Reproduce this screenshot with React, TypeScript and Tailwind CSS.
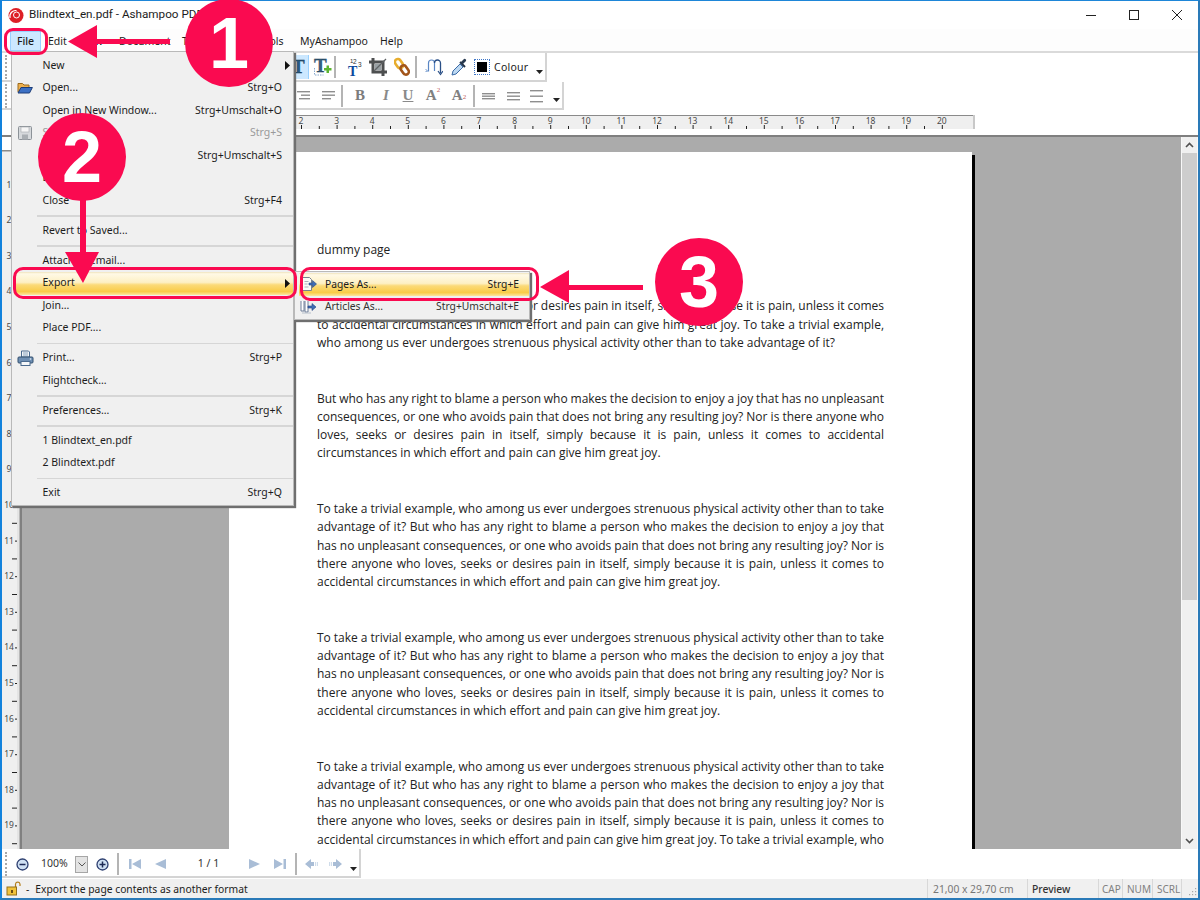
import React from "react";

const PINK = "#fa0a50";

const P1 = [
  ["Nor is there anyone who loves, seeks or desires pain in itself, simply because it is pain, unless it comes", 1],
  ["to accidental circumstances in which effort and pain can give him great joy. To take a trivial example,", 1],
  ["who among us ever undergoes strenuous physical activity other than to take advantage of it?", 0],
];
const P2 = [
  ["But who has any right to blame a person who makes the decision to enjoy a joy that has no unpleasant", 1],
  ["consequences, or one who avoids pain that does not bring any resulting joy? Nor is there anyone who", 1],
  ["loves, seeks or desires pain in itself, simply because it is pain, unless it comes to accidental", 1],
  ["circumstances in which effort and pain can give him great joy.", 0],
];
const P3 = [
  ["To take a trivial example, who among us ever undergoes strenuous physical activity other than to take", 1],
  ["advantage of it? But who has any right to blame a person who makes the decision to enjoy a joy that", 1],
  ["has no unpleasant consequences, or one who avoids pain that does not bring any resulting joy? Nor is", 1],
  ["there anyone who loves, seeks or desires pain in itself, simply because it is pain, unless it comes to", 1],
  ["accidental circumstances in which effort and pain can give him great joy.", 0],
];
const P5 = [
  ...P3.slice(0, 4),
  ["accidental circumstances in which effort and pain can give him great joy. To take a trivial example, who", 1],
];

function Para({ lines }: { lines: (string | number)[][] }) {
  return (
    <div className="mb-[37.5px]">
      {lines.map((l, i) => (
        <div key={i} className={l[1] ? "h-[18.25px] whitespace-nowrap text-justify [text-align-last:justify] [word-spacing:-0.7px]" : "h-[18.25px] whitespace-nowrap"}>
          {l[0]}
        </div>
      ))}
    </div>
  );
}

function Caret() {
  return (
    <svg width="7" height="4" viewBox="0 0 7 4" className="shrink-0">
      <path d="M0 0h7L3.500 4z" fill="#222" />
    </svg>
  );
}

function Sep() {
  return <div className="w-[2px] h-[22px] bg-[#b4b4b4] shrink-0" />;
}

function Lines({ ys, x1 = [1, 1, 1], x2 = [14, 14, 14] }: { ys: number[]; x1?: number[]; x2?: number[] }) {
  return (
    <svg width="15" height="16" viewBox="0 0 15 16" className="shrink-0">
      {ys.map((y, i) => (
        <rect key={i} x={x1[i]} y={y} width={x2[i] - x1[i]} height="1.4" fill="#8e8e8e" />
      ))}
    </svg>
  );
}

function Glyph({ children, cls }: { children: React.ReactNode; cls: string }) {
  return <span className={"flex items-center justify-center shrink-0 [font-family:'Liberation_Serif',serif] " + cls}>{children}</span>;
}

function FolderIcon() {
  return (
    <svg width="16" height="16" viewBox="0 0 16 16">
      <path d="M1 12V3.500h4.500l1.500 1.500h5v3" fill="#eeb04e" stroke="#9a6a1e" />
      <path d="M1 13l3-5.500h11.400L12.500 13z" fill="#3c70c4" stroke="#1c3d78" />
    </svg>
  );
}
function SaveIcon() {
  return (
    <svg width="16" height="16" viewBox="0 0 16 16">
      <rect x="1.500" y="1.500" width="13" height="13" rx="1" fill="#d6d9dc" stroke="#8c9298" />
      <rect x="4" y="2" width="8" height="5" fill="#f6f6f6" stroke="#a5a9ad" strokeWidth=".6" />
      <rect x="5" y="9.500" width="6" height="5" fill="#a9aeb3" />
    </svg>
  );
}
function PrintIcon() {
  return (
    <svg width="17" height="17" viewBox="0 0 17 17">
      <path d="M4.500 1h7l1 1v5h-8z" fill="#f2f5f8" stroke="#4b6a8e" />
      <path d="M6 3h5M6 5h5" stroke="#8aa2bc" />
      <rect x="1" y="7" width="15" height="6" rx="1" fill="#6f8fb3" stroke="#33506f" />
      <rect x="4" y="11.500" width="9" height="4" fill="#f5f7f9" stroke="#4b6a8e" />
      <circle cx="13.500" cy="9" r=".8" fill="#e5eef7" />
    </svg>
  );
}
function PagesIcon() {
  return (
    <svg width="16" height="16" viewBox="0 0 16 16">
      <path d="M1.500 1.500h7l2 2V14.500h-9z" fill="#fbfbf6" stroke="#77818f" />
      <path d="M3.500 5.500h4M3.500 8h3M3.500 11h4" stroke="#a9b1bc" />
      <path d="M8 7h3.500V4.500L15.500 8 11.500 11.500V9H8z" fill="#3f6db5" stroke="#23457f" strokeWidth=".6" />
    </svg>
  );
}
function ArticlesIcon() {
  return (
    <svg width="17" height="16" viewBox="0 0 17 16">
      <path d="M1 2v10h3V2M5 2v11h3V2" fill="#fff" stroke="#6e7f99" />
      <path d="M8 7h4V4.500L16 8l-4 3.500V9H8z" fill="#3f6db5" stroke="#23457f" strokeWidth=".6" />
      <path d="M2 14h9" stroke="#b6bfca" />
    </svg>
  );
}

type MI = { t?: string; s?: string; icon?: React.ReactNode; dis?: boolean; sub?: boolean; hi?: boolean; sep?: boolean };
const MENU: MI[] = [
  { t: "New", sub: true },
  { t: "Open...", s: "Strg+O", icon: <FolderIcon /> },
  { t: "Open in New Window...", s: "Strg+Umschalt+O" },
  { t: "Save", s: "Strg+S", icon: <SaveIcon />, dis: true },
  { t: "Save As...", s: "Strg+Umschalt+S" },
  { t: "Email..." },
  { t: "Close", s: "Strg+F4" },
  { sep: true },
  { t: "Revert to Saved..." },
  { sep: true },
  { t: "Attach to Email..." },
  { t: "Export", sub: true, hi: true },
  { t: "Join..." },
  { t: "Place PDF...." },
  { sep: true },
  { t: "Print...", s: "Strg+P", icon: <PrintIcon /> },
  { t: "Flightcheck..." },
  { sep: true },
  { t: "Preferences...", s: "Strg+K" },
  { sep: true },
  { t: "1 Blindtext_en.pdf" },
  { t: "2 Blindtext.pdf" },
  { sep: true },
  { t: "Exit", s: "Strg+Q" },
];

const HI =
  "bg-[linear-gradient(#efe3bc_0%,#fff9e6_8%,#fdf0c4_45%,#fbda78_56%,#f9cc48_85%,#fce79f_100%)]";

function Arrow() {
  return (
    <svg width="5" height="9" viewBox="0 0 5 9" className="shrink-0 ml-auto -mr-[8px]">
      <path d="M0 0l5 4.500L0 9z" fill="#111" />
    </svg>
  );
}

export default function App() {
  const hRuler = Array.from({ length: 41 }, (_, i) => i);
  const vRuler = Array.from({ length: 40 }, (_, i) => i);
  return (
    <div className="relative w-[1200px] h-[900px] overflow-hidden bg-white [font-family:'Noto_Sans',sans-serif] text-[#1c1c1c]">
      <div className="flex flex-col h-full border-t border-r-2 border-b-2 border-l-2 border-t-[#1e86d8] border-l-[#1282dc] border-r-[#2a7ab8] border-b-[#2a7ab8]">
        {/* title bar */}
        <div className="h-[28px] flex items-center shrink-0">
          <svg width="17" height="17" viewBox="0 0 17 17" className="ml-[5px] mt-[1px] shrink-0">
            <circle cx="9" cy="8.500" r="7.500" fill="#dd1f26" />
            <path d="M3 11C2 6 6 3 9.500 3.600" stroke="#fff" strokeWidth="1.200" fill="none" />
            <circle cx="9.500" cy="8" r="3" fill="none" stroke="#fff" strokeWidth="1" />
          </svg>
          <span className="ml-[5px] text-[11.7px] [font-family:'Roboto',sans-serif] whitespace-nowrap">Blindtext_en.pdf - Ashampoo PDF Pro</span>
          <div className="ml-auto flex items-center gap-[33px] mr-[16px]">
            <svg width="10" height="10" viewBox="0 0 10 10"><path d="M0 5.500h10" stroke="#222" /></svg>
            <svg width="10" height="10" viewBox="0 0 10 10"><rect x=".5" y=".5" width="9" height="9" fill="none" stroke="#222" /></svg>
            <svg width="10" height="10" viewBox="0 0 10 10"><path d="M0 0l10 10M10 0L0 10" stroke="#222" /></svg>
          </div>
        </div>
        {/* menu bar */}
        <div className="h-[24px] shrink-0 flex items-center border-b-2 border-[#dadada] bg-[#fdfdfd] text-[10.5px] pt-[2px]">
          <div className="ml-[8px] w-[31px] h-[20px] flex items-center justify-center bg-[#cce8ff] border border-[#99d1ff] font-medium pt-[1px]">File</div>
          <span className="ml-[7px] w-[32px] pt-[1px]">Edit</span>
          <span className="w-[39px] pt-[1px]">View</span>
          <span className="w-[63px] pt-[1px]">Document</span>
          <span className="w-[76px] pt-[1px]">Text</span>
          <span className="w-[42px] pt-[1px]">Tools</span>
          <span className="w-[80px] pt-[1px]">MyAshampoo</span>
          <span className="pt-[1px]">Help</span>
        </div>
        {/* toolbars */}
        <div className="h-[62px] shrink-0 flex flex-col">
          <div className="w-[545px] h-[29px] flex items-center border-r-2 border-b-2 border-[#d4d4d4] pl-[3px] pt-[1px]">
            <div className="h-[24px] border-l-2 border-dotted border-[#a8a8a8]" />
            <div className="ml-[287px] w-[15px] h-[24px] bg-[#cce8ff] border-r border-[#99d1ff] flex items-center justify-center overflow-hidden">
              <svg width="18" height="18" viewBox="0 0 18 18" className="shrink-0">
                <text x="0" y="15" fontFamily="Liberation Serif" fontWeight="700" fontSize="19" fill="#2b5a7d" stroke="#16324a" strokeWidth=".3">T</text>
              </svg>
            </div>
            <div className="w-[25px] flex justify-center">
              <svg width="20" height="20" viewBox="0 0 20 20" className="overflow-visible">
                <path d="M2.500 11v7h9" fill="none" stroke="#88a9cc" strokeDasharray="1.500 1" />
                <text x="2" y="15" fontFamily="Liberation Serif" fontWeight="700" fontSize="19" fill="#35607f" stroke="#16324a" strokeWidth=".3">T</text>
                <path d="M12 11h2.500V8.500h2.500V11h2.500v2.500H17V16h-2.500v-2.500H12z" fill="#5cb531" />
              </svg>
            </div>
            <Sep />
            <div className="ml-[6px] w-[24px] flex justify-center">
              <svg width="20" height="20" viewBox="0 0 20 20" className="overflow-visible">
                <text x="4" y="19" fontFamily="Liberation Serif" fontWeight="700" fontSize="14" fill="#0c4a9e">T</text>
                <text x="9" y="7" fontFamily="Liberation Sans" fontSize="6.500" fill="#333">2</text>
                <text x="6" y="5.500" fontFamily="Liberation Sans" fontSize="6" fill="#333">1</text>
                <text x="14" y="10" fontFamily="Liberation Sans" fontSize="6.500" fill="#333">3</text>
              </svg>
            </div>
            <div className="w-[23px] flex justify-center">
              <svg width="18" height="18" viewBox="0 0 18 18">
                <path d="M4 0v14h14M0 4h14v14" fill="none" stroke="#4d4f50" strokeWidth="3" />
                <rect x="6" y="6" width="6" height="6" fill="#98a0a4" />
                <path d="M5 13L17 1" stroke="#5e6264" strokeWidth="1.200" />
              </svg>
            </div>
            <div className="w-[25px] flex justify-center">
              <svg width="16" height="20" viewBox="0 0 16 20">
                <g transform="rotate(-35 8 10)" fill="none">
                  <rect x="4.500" y="0.500" width="6" height="10" rx="3" stroke="#e7ad2e" strokeWidth="2.600" />
                  <rect x="5.500" y="9" width="6" height="10" rx="3" stroke="#a2551a" strokeWidth="2.600" />
                </g>
              </svg>
            </div>
            <div className="ml-[1px]"><Sep /></div>
            <div className="ml-[5px] w-[24px] flex justify-center">
              <svg width="18" height="18" viewBox="0 0 18 18" fill="none">
                <path d="M1 13h2.500V5a3 3 0 0 1 6 0v8" stroke="#5a86c4" strokeWidth="1.200" />
                <path d="M9.500 5a3 3 0 0 1 6 0v10" stroke="#2a4f86" strokeWidth="1.300" />
                <path d="M13 13l2.500 3.500L18 13" stroke="#2a4f86" strokeWidth="1.200" />
                <path d="M1 11v4" stroke="#7fa3d4" strokeDasharray="1 1" />
              </svg>
            </div>
            <div className="ml-[2px] w-[24px] flex justify-center">
              <svg width="18" height="18" viewBox="0 0 18 18" fill="none">
                <path d="M1 17l1-4 7-7 3 3-7 7z" fill="#bcd8f2" stroke="#3a6aa6" />
                <path d="M9 4l5 5" stroke="#1f2f44" strokeWidth="2" />
                <path d="M11.500 6.500l3.500-3.500a1.500 1.500 0 0 0-2-2L9.500 4.500z" fill="#27394f" />
              </svg>
            </div>
            <div className="ml-[2px] w-[16px] h-[16px] border border-dotted border-[#3f77c9] flex items-center justify-center">
              <div className="w-[10px] h-[10px] bg-black" />
            </div>
            <span className="ml-[4px] mt-[2px] text-[10.5px] tracking-[0.25px]">Colour</span>
            <div className="ml-auto mr-[2px] mt-[9px]"><Caret /></div>
          </div>
          <div className="w-[562px] h-[28px] flex items-center border-r-2 border-b-2 border-[#d4d4d4] pl-[3px] pt-[1px]">
            <div className="h-[24px] border-l-2 border-dotted border-[#a8a8a8]" />
            <div className="ml-[289px] w-[15px]"><Lines ys={[3, 6.5, 10]} x1={[1, 5, 3]} /></div>
            <div className="ml-[10px] w-[15px]"><Lines ys={[3, 6.5, 10]} x2={[14, 14, 10]} /></div>
            <div className="ml-[5px]"><Sep /></div>
            <Glyph cls="ml-[10px] w-[14px] text-[15px] font-bold text-[#7c7c7c]">B</Glyph>
            <Glyph cls="ml-[12px] w-[14px] text-[15px] font-bold italic text-[#8a8a8a]">I</Glyph>
            <Glyph cls="ml-[8px] w-[14px] text-[15px] font-bold underline text-[#8a8a8a]">U</Glyph>
            <Glyph cls="ml-[10px] w-[16px] text-[15px] font-bold text-[#808080]">A<sup className="text-[7px] text-[#c0605c] font-normal -mt-[4px]">2</sup></Glyph>
            <Glyph cls="ml-[10px] w-[16px] text-[15px] font-bold text-[#808080]">A<sub className="text-[7px] text-[#c0605c] font-normal">2</sub></Glyph>
            <div className="ml-[6px]"><Sep /></div>
            <div className="ml-[6px]"><Lines ys={[5, 7.5, 10]} /></div>
            <div className="ml-[10px]"><Lines ys={[4, 7.5, 11]} /></div>
            <div className="ml-[8px]"><Lines ys={[2, 7.5, 13]} /></div>
            <div className="ml-auto mr-[2px] mt-[9px]"><Caret /></div>
          </div>
        </div>
        {/* horizontal ruler */}
        <div className="h-[22px] shrink-0 border-b-2 border-[#7f7f7f] pl-[18px]">
          <svg width="956" height="20" viewBox="20 115 956 20">
            <rect x="20" y="115" width="953" height="14" fill="#efefef" />
            <rect x="20" y="114.500" width="953" height="1.500" fill="#8a8a8a" />
            <rect x="973" y="115" width="2" height="14" fill="#c8c8c8" />
            {hRuler.map((i) => {
              const x = 229.8 + i * 17.8;
              const major = i % 2 === 0;
              return <rect key={i} x={x} y={major ? 125 : 126} width="1" height={major ? 4 : 3} fill="#222" />;
            })}
            {Array.from({ length: 20 }, (_, i) => i + 1).map((n) => (
              <text key={n} x={229.8 + n * 35.6} y="124" textAnchor="middle" fontFamily="Noto Sans" fontSize="8.500" fill="#4a4a4a">{n}</text>
            ))}
          </svg>
        </div>
        {/* main */}
        <div className="flex-1 min-h-0 flex">
          <div className="w-[20px] shrink-0">
            <svg width="20" height="712" viewBox="2 137 20 712">
              <rect x="2" y="150" width="15" height="699" fill="#efefef" />
              <rect x="17" y="150" width="2.500" height="699" fill="#e4e4e4" />
              <rect x="2" y="150" width="17.500" height="1.500" fill="#8a8a8a" />
              <rect x="19.500" y="150" width="2.500" height="699" fill="#808080" />
              {vRuler.map((i) => {
                const y = 149 + i * 17.8;
                const major = i % 2 === 0;
                return <rect key={i} x={major ? 15 : 12} y={y} width={major ? 2 : 5} height="1" fill="#222" />;
              })}
              {Array.from({ length: 19 }, (_, i) => i + 1).map((n) => (
                <text key={n} x="9" y={149 + n * 35.6 + 3} textAnchor="middle" fontFamily="Noto Sans" fontSize="8.500" fill="#4a4a4a">{n}</text>
              ))}
            </svg>
          </div>
          <div className="flex-1 min-w-0 bg-[#ababab] overflow-hidden pt-[15px] pl-[207px]">
            <div className="w-[743px] h-[800px] bg-white shadow-[3px_3px_0_#000] pl-[88px] pr-[88px] pt-[88.5px] text-[12px] leading-[18.25px] text-[#222] [font-family:'Open_Sans',sans-serif]">
              <div className="h-[18.25px] mb-[38.5px]">dummy page</div>
              <Para lines={P1} />
              <Para lines={P2} />
              <Para lines={P3} />
              <Para lines={P3} />
              <Para lines={P5} />
            </div>
          </div>
          <div className="w-[17px] shrink-0 bg-[#f0f0f0] flex flex-col items-center border-l border-r border-[#f8f8f8]">
            <div className="h-[16px] w-full flex items-center justify-center shrink-0">
              <svg width="9" height="6" viewBox="0 0 9 6"><path d="M1 5l3.500-3.500L8 5" fill="none" stroke="#505050" strokeWidth="1.600" /></svg>
            </div>
            <div className="h-[447px] w-full bg-[#cdcdcd] shrink-0" />
            <div className="mt-auto h-[16px] w-full flex items-center justify-center shrink-0">
              <svg width="9" height="6" viewBox="0 0 9 6"><path d="M1 1l3.500 3.500L8 1" fill="none" stroke="#505050" strokeWidth="1.600" /></svg>
            </div>
          </div>
        </div>
        {/* nav toolbar */}
        <div className="h-[30px] shrink-0 flex">
          <div className="w-[359px] h-[29px] flex items-center bg-white border-r-2 border-b-2 border-[#d4d4d4] pl-[3px] pt-[3px] text-[10.5px]">
            <div className="h-[24px] border-l-2 border-dotted border-[#a8a8a8]" />
            <svg width="13" height="13" viewBox="0 0 13 13" className="ml-[9px] shrink-0">
              <circle cx="6.500" cy="6.500" r="5.500" fill="#cfe0f3" stroke="#2d3f70" strokeWidth="1.300" />
              <path d="M3.500 6.500h6" stroke="#1d2a55" strokeWidth="1.500" />
            </svg>
            <span className="ml-[12px] w-[28px] text-[#333]">100%</span>
            <div className="ml-[6px] w-[13px] h-[17px] bg-[#e3e3e3] border border-[#a6a6a6] flex items-center justify-center shrink-0">
              <svg width="8" height="5" viewBox="0 0 8 5"><path d="M.5.5L4 4 7.500.5" fill="none" stroke="#555" /></svg>
            </div>
            <svg width="13" height="13" viewBox="0 0 13 13" className="ml-[8px] shrink-0">
              <circle cx="6.500" cy="6.500" r="5.500" fill="#cfe0f3" stroke="#2d3f70" strokeWidth="1.300" />
              <path d="M3.500 6.500h6M6.500 3.500v6" stroke="#1d2a55" strokeWidth="1.500" />
            </svg>
            <div className="ml-[8px]"><Sep /></div>
            <svg width="12" height="12" viewBox="0 0 12 12" className="ml-[10px] shrink-0"><path d="M0 1h2.500v10H0zM12 1v10L3 6z" fill="#a9bdd6" /></svg>
            <svg width="11" height="12" viewBox="0 0 11 12" className="ml-[14px] shrink-0"><path d="M11 1v10L0 6z" fill="#a9bdd6" /></svg>
            <span className="ml-[29px] w-[27px] text-center text-[#333] whitespace-nowrap">1 / 1</span>
            <svg width="11" height="12" viewBox="0 0 11 12" className="ml-[27px] shrink-0"><path d="M0 1v10l11-5z" fill="#a9bdd6" /></svg>
            <svg width="12" height="12" viewBox="0 0 12 12" className="ml-[14px] shrink-0"><path d="M12 1H9.500v10H12zM0 1v10l9-5z" fill="#a9bdd6" /></svg>
            <div className="ml-[9px]"><Sep /></div>
            <svg width="13" height="10" viewBox="0 0 13 10" className="ml-[8px] shrink-0"><path d="M0 5l6-5v3h3v4H6v3z" fill="#a9bdd6" /><path d="M10 3h1.200v4H10zM12 3h1v4h-1z" fill="#cfdcea" /></svg>
            <svg width="13" height="10" viewBox="0 0 13 10" className="ml-[11px] shrink-0"><path d="M13 5L7 0v3H4v4h3v3z" fill="#a9bdd6" /><path d="M3 3H1.800v4H3zM1 3H0v4h1z" fill="#cfdcea" /></svg>
            <div className="ml-auto mr-[2px] mt-[9px]"><Caret /></div>
          </div>
        </div>
        {/* status bar */}
        <div className="h-[19px] shrink-0 flex items-center bg-[#f0f0f0] text-[10.3px]">
          <svg width="15" height="15" viewBox="0 0 15 15" className="ml-[4px] shrink-0">
            <path d="M9.500 6V3a2.300 2.300 0 0 1 4.500 0v2" fill="none" stroke="#b57f1c" strokeWidth="1.200" />
            <rect x="1" y="6" width="9.500" height="8" fill="#f0c23a" stroke="#94701a" />
            <rect x="5" y="9" width="2" height="3" fill="#6a4c10" />
          </svg>
          <span className="ml-[5px] mt-[2px]">-</span>
          <span className="ml-[6px] mt-[2px] whitespace-nowrap">Export the page contents as another format</span>
          <div className="ml-auto flex h-full">
            <div className="w-[100px] border-l border-[#d8d8d8] pl-[5px] pt-[2px] flex items-center text-[#777] whitespace-nowrap">21,00 x 29,70 cm</div>
            <div className="w-[71px] border-l border-[#d8d8d8] pl-[4px] pt-[2px] flex items-center font-medium text-[#333]">Preview</div>
            <div className="w-[24px] border-l border-[#d8d8d8] pl-[3px] pt-[2px] flex items-center text-[#808080] text-[10px]">CAP</div>
            <div className="w-[30px] border-l border-[#d8d8d8] pl-[4px] pt-[2px] flex items-center text-[#808080] text-[10px]">NUM</div>
            <div className="w-[29px] border-l border-[#d8d8d8] pl-[4px] pt-[2px] flex items-center text-[#808080] text-[10px]">SCRL</div>
            <div className="w-[17px] border-l border-[#d8d8d8] flex items-end justify-end pb-[2px] pr-[1px]">
              <svg width="8" height="8" viewBox="0 0 8 8" fill="#a8a8a8">
                <rect x="6" y="6" width="1.200" height="1.200" /><rect x="3" y="6" width="1.200" height="1.200" /><rect x="0" y="6" width="1.200" height="1.200" />
                <rect x="6" y="3" width="1.200" height="1.200" /><rect x="3" y="3" width="1.200" height="1.200" /><rect x="6" y="0" width="1.200" height="1.200" />
              </svg>
            </div>
          </div>
        </div>
      </div>

      {/* file menu */}
      <div className="absolute left-[11px] top-[51px] w-[283px] h-[455px] bg-[#f0f0f0] border border-[#b9b9b9] shadow-[2px_2px_1px_#6f6f6f] pt-[2.5px] text-[10.5px]">
        {MENU.map((m, i) =>
          m.sep ? (
            <div key={i} className="h-[7.5px] flex items-center pl-[25px]">
              <div className="w-full h-[1.5px] bg-[#d6d6d6]" />
            </div>
          ) : (
            <div
              key={i}
              className={
                "h-[22.5px] flex items-center pr-[11px] " +
                (m.hi ? "ml-[2px] pl-[28.5px] " + HI : "pl-[5px]")
              }
            >
              {!m.hi && <div className="w-[25.5px] shrink-0 flex items-center">{m.icon}</div>}
              <span className={m.dis ? "text-[#9a9a9a] whitespace-nowrap" : "whitespace-nowrap"}>{m.t}</span>
              {m.sub && <Arrow />}
              {m.s && <span className={"ml-auto whitespace-nowrap " + (m.dis ? "text-[#9a9a9a]" : "")}>{m.s}</span>}
            </div>
          )
        )}
      </div>

      {/* export submenu */}
      <div className="absolute left-[294px] top-[271px] w-[236px] h-[49px] bg-[#f0f0f0] border border-[#b9b9b9] shadow-[2px_2px_1px_#6f6f6f] text-[10.3px] pt-[1px]">
        <div className={"h-[22.5px] ml-[4px] flex items-center pr-[10px] " + HI}>
          <div className="w-[26px] pl-[2px] shrink-0"><PagesIcon /></div>
          <span>Pages As...</span>
          <span className="ml-auto">Strg+E</span>
        </div>
        <div className="h-[22.5px] ml-[4px] flex items-center pr-[10px] text-[#333]">
          <div className="w-[26px] pl-[1px] shrink-0"><ArticlesIcon /></div>
          <span>Articles As...</span>
          <span className="ml-auto">Strg+Umschalt+E</span>
        </div>
      </div>

      {/* annotations */}
      <div className="absolute left-[4px] top-[28px] w-[44px] h-[27px] rounded-[9px] border-[3px] border-[#fa0a50]" />
      <div className="absolute left-[13px] top-[267px] w-[284px] h-[32px] rounded-[10px] border-[3px] border-[#fa0a50]" />
      <div className="absolute left-[300px] top-[267px] w-[239px] h-[34px] rounded-[10px] border-[3px] border-[#fa0a50]" />
      <svg className="absolute left-0 top-0 pointer-events-none" width="1200" height="900" viewBox="0 0 1200 900">
        <path d="M170 39H97V25L68 41.500 97 58V44H170z" fill={PINK} />
        <path d="M80 195V252H65L83 283 99 252H86V195z" fill={PINK} />
        <path d="M643 285H569V270L540 287 569 303V290H643z" fill={PINK} />
      </svg>
      {[
        { c: "left-[185px] top-[-1px]", d: "1" },
        { c: "left-[38px] top-[113px]", d: "2" },
        { c: "left-[655px] top-[238px]", d: "3" },
      ].map((a) => (
        <div
          key={a.d}
          className={"absolute w-[88px] h-[88px] rounded-full bg-[#fa0a50] flex items-center justify-center text-white text-[72px] font-bold leading-none [font-family:'Liberation_Sans',sans-serif] " + a.c}
        >
          {a.d}
        </div>
      ))}
    </div>
  );
}
